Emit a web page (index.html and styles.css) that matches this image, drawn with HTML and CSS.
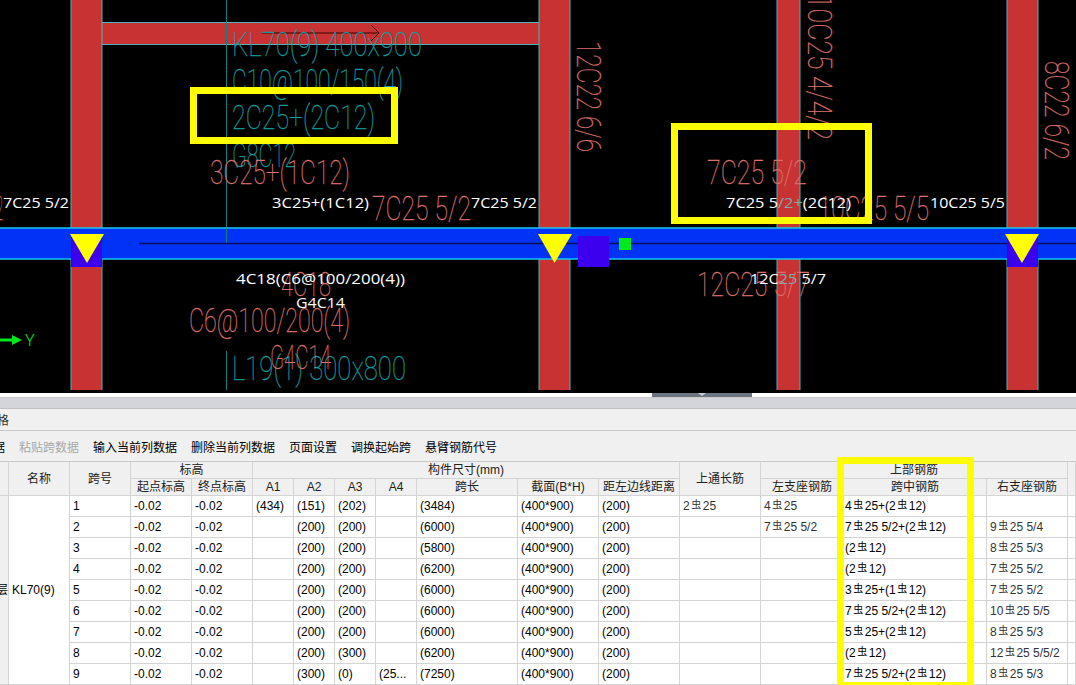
FILE: index.html
```html
<!DOCTYPE html>
<html lang="zh-CN">
<head>
  <meta charset="UTF-8" />
  <meta name="viewport" content="width=device-width, initial-scale=1.0" />
  <title>平法表格</title>
  <link rel="stylesheet" href="styles.css">
</head>
<body>

<div class="canvas">
  <svg class="drawing" width="1076" height="390" viewBox="0 0 1076 390">
    <!-- beam and columns -->
    <g class="member">
      <rect x="100" y="22.500" width="440" height="22" />
      <rect x="71" y="-5" width="31" height="410" />
      <rect x="539" y="-5" width="31" height="410" />
      <rect x="777" y="-5" width="23" height="410" />
      <rect x="1007" y="-5" width="31" height="410" />
    </g>

    <!-- leader lines -->
    <line class="leader" x1="226.500" y1="0" x2="226.500" y2="228" />
    <line class="leader" x1="226.500" y1="351" x2="226.500" y2="390" />

    <!-- beam in edit -->
    <rect class="band" x="-2" y="228" width="1080" height="31" />
    <line class="leader" x1="226.500" y1="228" x2="226.500" y2="244" />
    <line class="band-axis" x1="139" y1="243.500" x2="1076" y2="243.500" />
    <rect class="grip" x="71" y="234" width="31" height="33" />
    <rect class="grip" x="1007" y="234" width="31" height="33" />
    <rect class="grip" x="578" y="236" width="31" height="31" />
    <rect class="point" x="619" y="238" width="12" height="12" />
    <polygon class="support" points="70,234 104,234 87,263" />
    <polygon class="support" points="538,234 572,234 554.500,263" />
    <polygon class="support" points="1005,234 1039,234 1022,263" />

    <polyline class="arrow" points="262,33 379,33 371,25 379,33 371,41" />

    <!-- teal beam marks -->
    <g class="cad teal">
      <text x="232" y="56" textLength="190" lengthAdjust="spacingAndGlyphs">KL70(9) 400x900</text>
      <text x="232" y="93" textLength="171" lengthAdjust="spacingAndGlyphs">C10@100/150(4)</text>
      <text x="232" y="129" textLength="143" lengthAdjust="spacingAndGlyphs">2C25+(2C12)</text>
      <text x="232" y="167" textLength="64" lengthAdjust="spacingAndGlyphs">G8C12</text>
      <text x="232" y="380" textLength="174" lengthAdjust="spacingAndGlyphs">L19(1) 300x800</text>
    </g>

    <!-- salmon rebar marks -->
    <g class="cad salmon">
      <text x="210" y="184" textLength="140" lengthAdjust="spacingAndGlyphs">3C25+(1C12)</text>
      <text x="372" y="220" textLength="99" lengthAdjust="spacingAndGlyphs">7C25 5/2</text>
      <text x="707" y="184" textLength="100" lengthAdjust="spacingAndGlyphs">7C25 5/2</text>
      <text x="818" y="220" textLength="111" lengthAdjust="spacingAndGlyphs">10C25 5/5</text>
      <text x="-4" y="220" textLength="7" lengthAdjust="spacingAndGlyphs">2</text>
      <text x="281" y="296" textLength="50" lengthAdjust="spacingAndGlyphs">4C18</text>
      <text x="189" y="332" textLength="161" lengthAdjust="spacingAndGlyphs">C6@100/200(4)</text>
      <text x="270" y="369" textLength="61" lengthAdjust="spacingAndGlyphs">G4C14</text>
      <text x="697" y="296" textLength="113" lengthAdjust="spacingAndGlyphs">12C25 5/7</text>
      <text transform="translate(577 41) rotate(90)" textLength="111" lengthAdjust="spacingAndGlyphs">12C22 6/6</text>
      <text transform="translate(808 -6) rotate(90)" textLength="146" lengthAdjust="spacingAndGlyphs">10C25 4/4/2</text>
      <text transform="translate(1045 61) rotate(90)" textLength="99" lengthAdjust="spacingAndGlyphs">8C22 6/2</text>
    </g>

    <!-- highlight boxes -->
    <rect class="mark" x="193.500" y="90.500" width="201" height="50" />
    <rect class="mark" x="674.500" y="126.500" width="194" height="94" />

    <!-- white labels -->
    <g class="label">
      <text x="3" y="208" textLength="66" lengthAdjust="spacingAndGlyphs">7C25 5/2</text>
      <text x="272" y="208" textLength="97" lengthAdjust="spacingAndGlyphs">3C25+(1C12)</text>
      <text x="471" y="208" textLength="66" lengthAdjust="spacingAndGlyphs">7C25 5/2</text>
      <text x="726" y="208" textLength="125" lengthAdjust="spacingAndGlyphs">7C25 5<tspan class="label-dim">/2+</tspan>(2C12)</text>
      <text x="930" y="208" textLength="75" lengthAdjust="spacingAndGlyphs">10C25 5/5</text>
      <text x="236" y="284" textLength="169" lengthAdjust="spacingAndGlyphs">4C18(C6@100/200(4))</text>
      <text x="296" y="308" textLength="49" lengthAdjust="spacingAndGlyphs">G4C14</text>
      <text x="750" y="284" textLength="76" lengthAdjust="spacingAndGlyphs">12C<tspan class="label-dim">25 </tspan>5/7</text>
    </g>

    <!-- axis -->
    <line class="axis" x1="0" y1="340" x2="16" y2="340" />
    <polygon class="axis-head" points="12,335 22,340 12,345" />
    <text class="axis-name" x="25" y="346">Y</text>
  </svg>
</div>

<div class="splitter"><span class="splitter-grip"></span></div>
<div class="panel-bar"></div>
<div class="panel-title"><span class="panel-name">平法表格</span></div>

<div class="toolbar">
  <span class="tool first">复制跨数据</span>
  <span class="tool disabled">粘贴跨数据</span>
  <span class="tool">输入当前列数据</span>
  <span class="tool">删除当前列数据</span>
  <span class="tool">页面设置</span>
  <span class="tool">调换起始跨</span>
  <span class="tool">悬臂钢筋代号</span>
</div>

<div class="table-wrap">
  <table class="grid">
    <colgroup>
      <col class="w9"><col class="w61"><col class="w61"><col class="w61"><col class="w61">
      <col class="w41"><col class="w41"><col class="w41"><col class="w41">
      <col class="w101"><col class="w81"><col class="w81"><col class="w81">
      <col class="w83"><col class="w143"><col class="w81"><col class="w8">
    </colgroup>
    <thead>
      <tr>
        <th rowspan="2"></th>
        <th rowspan="2">名称</th>
        <th rowspan="2">跨号</th>
        <th colspan="2">标高</th>
        <th colspan="7">构件尺寸(mm)</th>
        <th rowspan="2">上通长筋</th>
        <th colspan="3">上部钢筋</th>
        <th rowspan="2"></th>
      </tr>
      <tr>
        <th>起点标高</th>
        <th>终点标高</th>
        <th>A1</th>
        <th>A2</th>
        <th>A3</th>
        <th>A4</th>
        <th>跨长</th>
        <th>截面(B*H)</th>
        <th>距左边线距离</th>
        <th>左支座钢筋</th>
        <th>跨中钢筋</th>
        <th>右支座钢筋</th>
      </tr>
    </thead>
    <tbody>
      <tr>
        <td rowspan="9" class="floor"><div class="floor-clip"><span>首层</span></div></td>
        <td rowspan="9" class="name">KL70(9)</td>
        <td>1</td><td>-0.02</td><td>-0.02</td><td>(434)</td><td>(151)</td><td>(202)</td><td></td><td>(3484)</td><td>(400*900)</td><td>(200)</td>
        <td class="bars">2<i>虫</i>25</td><td class="bars">4<i>虫</i>25</td><td class="mid">4<i>虫</i>25+(2<i>虫</i>12)</td><td class="bars"></td><td></td>
      </tr>
      <tr>
        <td>2</td><td>-0.02</td><td>-0.02</td><td></td><td>(200)</td><td>(200)</td><td></td><td>(6000)</td><td>(400*900)</td><td>(200)</td>
        <td></td><td class="bars">7<i>虫</i>25 5/2</td><td class="mid">7<i>虫</i>25 5/2+(2<i>虫</i>12)</td><td class="bars">9<i>虫</i>25 5/4</td><td></td>
      </tr>
      <tr>
        <td>3</td><td>-0.02</td><td>-0.02</td><td></td><td>(200)</td><td>(200)</td><td></td><td>(5800)</td><td>(400*900)</td><td>(200)</td>
        <td></td><td></td><td class="mid">(2<i>虫</i>12)</td><td class="bars">8<i>虫</i>25 5/3</td><td></td>
      </tr>
      <tr>
        <td>4</td><td>-0.02</td><td>-0.02</td><td></td><td>(200)</td><td>(200)</td><td></td><td>(6200)</td><td>(400*900)</td><td>(200)</td>
        <td></td><td></td><td class="mid">(2<i>虫</i>12)</td><td class="bars">7<i>虫</i>25 5/2</td><td></td>
      </tr>
      <tr>
        <td>5</td><td>-0.02</td><td>-0.02</td><td></td><td>(200)</td><td>(200)</td><td></td><td>(6000)</td><td>(400*900)</td><td>(200)</td>
        <td></td><td></td><td class="mid">3<i>虫</i>25+(1<i>虫</i>12)</td><td class="bars">7<i>虫</i>25 5/2</td><td></td>
      </tr>
      <tr>
        <td>6</td><td>-0.02</td><td>-0.02</td><td></td><td>(200)</td><td>(200)</td><td></td><td>(6000)</td><td>(400*900)</td><td>(200)</td>
        <td></td><td></td><td class="mid">7<i>虫</i>25 5/2+(2<i>虫</i>12)</td><td class="bars">10<i>虫</i>25 5/5</td><td></td>
      </tr>
      <tr>
        <td>7</td><td>-0.02</td><td>-0.02</td><td></td><td>(200)</td><td>(200)</td><td></td><td>(6000)</td><td>(400*900)</td><td>(200)</td>
        <td></td><td></td><td class="mid">5<i>虫</i>25+(2<i>虫</i>12)</td><td class="bars">8<i>虫</i>25 5/3</td><td></td>
      </tr>
      <tr>
        <td>8</td><td>-0.02</td><td>-0.02</td><td></td><td>(200)</td><td>(300)</td><td></td><td>(6200)</td><td>(400*900)</td><td>(200)</td>
        <td></td><td></td><td class="mid">(2<i>虫</i>12)</td><td class="bars">12<i>虫</i>25 5/5/2</td><td></td>
      </tr>
      <tr>
        <td>9</td><td>-0.02</td><td>-0.02</td><td></td><td>(300)</td><td>(0)</td><td>(25...</td><td>(7250)</td><td>(400*900)</td><td>(200)</td>
        <td></td><td></td><td class="mid">7<i>虫</i>25 5/2+(2<i>虫</i>12)</td><td class="bars">8<i>虫</i>25 5/3</td><td></td>
      </tr>
    </tbody>
  </table>
  <div class="table-mark"></div>
</div>

</body>
</html>
```

FILE: styles.css
```css
* {
  margin: 0;
  padding: 0;
  box-sizing: border-box;
}

html, body {
  height: 685px;
  overflow: hidden;
}

body {
  background-color: #fff;
  font-family: "Liberation Sans", "Noto Sans CJK SC", sans-serif;
  font-size: 12px;
  color: #000;
}

/* drawing area */
.canvas {
  height: 393px;
  background-color: #000;
}

.drawing {
  display: block;
}

.member rect {
  fill: #c83232;
  stroke: #4fb4b8;
  stroke-width: 1;
}

.leader {
  stroke: #0f7f80;
  stroke-width: 1;
}

.band {
  fill: #0033f5;
  stroke: #14c8ec;
  stroke-width: 1.5;
}

.band-axis {
  stroke: #00105c;
  stroke-width: 1.5;
}

.grip {
  fill: #3d00ee;
}

.point {
  fill: #00e81e;
}

.support {
  fill: #ffff00;
}

.arrow {
  fill: none;
  stroke: #3a0505;
  stroke-width: 1;
}

.cad text {
  font-family: Roboto, sans-serif;
  font-weight: 100;
  font-size: 34px;
  stroke-width: 0.3;
}

.teal text {
  fill: #139a9c;
  stroke: #139a9c;
}

.salmon text {
  fill: #d9706c;
  stroke: #d9706c;
}

.mark {
  fill: none;
  stroke: #ffff00;
  stroke-width: 7;
}

.label text {
  font-family: "Open Sans", sans-serif;
  font-size: 15px;
  fill: #fff;
}

.label .label-dim {
  fill: #7fa8ac;
}

.axis {
  stroke: #00e81e;
  stroke-width: 3;
}

.axis-head {
  fill: #00e81e;
}

.axis-name {
  font-family: Roboto, sans-serif;
  font-weight: 300;
  font-size: 16px;
  fill: #00e81e;
}

/* splitter and panel header */
.splitter {
  height: 5px;
  background-color: #fff;
  border-bottom: 1px solid #c8c8c8;
  display: flex;
  justify-content: center;
  padding-left: 327px;
}

.splitter-grip {
  display: block;
  width: 100px;
  height: 4px;
  background-color: #6d7680;
  position: relative;
}

.splitter-grip::after {
  content: "";
  position: absolute;
  top: 0;
  left: 46px;
  border-left: 4px solid transparent;
  border-right: 4px solid transparent;
  border-top: 3px solid #c8ccd0;
}

.panel-bar {
  height: 11px;
  background-color: #d4d5da;
  border-bottom: 1px solid #bfc0c4;
}

.panel-title {
  height: 22px;
  background-color: #f0f0f0;
  border-bottom: 1px solid #c8c8c8;
  display: flex;
  align-items: center;
  overflow: hidden;
}

.panel-name {
  margin-left: -39px;
  white-space: nowrap;
  color: #333;
}

.toolbar {
  height: 31px;
  background-color: #f0f0f0;
  border-bottom: 1px solid #c8c8c8;
  display: flex;
  align-items: center;
  gap: 14px;
  overflow: hidden;
}

.tool {
  white-space: nowrap;
  flex: none;
}

.tool.first {
  margin-left: -55px;
}

.tool.disabled {
  color: #a8a8a8;
}

/* table */
.table-wrap {
  position: relative;
}

.grid {
  width: 1076px;
  table-layout: fixed;
  border-collapse: separate;
  border-spacing: 0;
}

.w8 { width: 8px; }
.w9 { width: 9px; }
.w41 { width: 41px; }
.w61 { width: 61px; }
.w81 { width: 81px; }
.w83 { width: 83px; }
.w101 { width: 101px; }
.w143 { width: 143px; }

.grid th {
  height: 17px;
  line-height: 14px;
  background-color: #f0f0f0;
  border-right: 1px solid #d4d4d4;
  border-bottom: 1px solid #d4d4d4;
  font-weight: 400;
  color: #222;
  white-space: nowrap;
  overflow: hidden;
}

.grid td {
  height: 21px;
  line-height: 14px;
  padding: 0 3px 1px;
  background-color: #fff;
  border-right: 1px solid #d4d4d4;
  border-bottom: 1px solid #d4d4d4;
  white-space: nowrap;
  overflow: hidden;
}

.grid td.floor {
  padding: 0;
  background-color: #f0f0f0;
}

.floor-clip {
  display: flex;
  justify-content: flex-end;
  overflow: hidden;
  width: 8px;
}

.floor-clip span {
  flex: none;
}

.grid td.bars {
  color: #333;
}

.grid td.mid {
  padding-left: 1px;
}

.grid td i {
  font-style: normal;
  font-size: 10px;
  line-height: 10px;
  margin: 0 1.500px;
  vertical-align: 2px;
}

.table-mark {
  position: absolute;
  top: -5px;
  left: 837px;
  width: 137px;
  height: 232px;
  border: 7px solid #ffff00;
}
```
